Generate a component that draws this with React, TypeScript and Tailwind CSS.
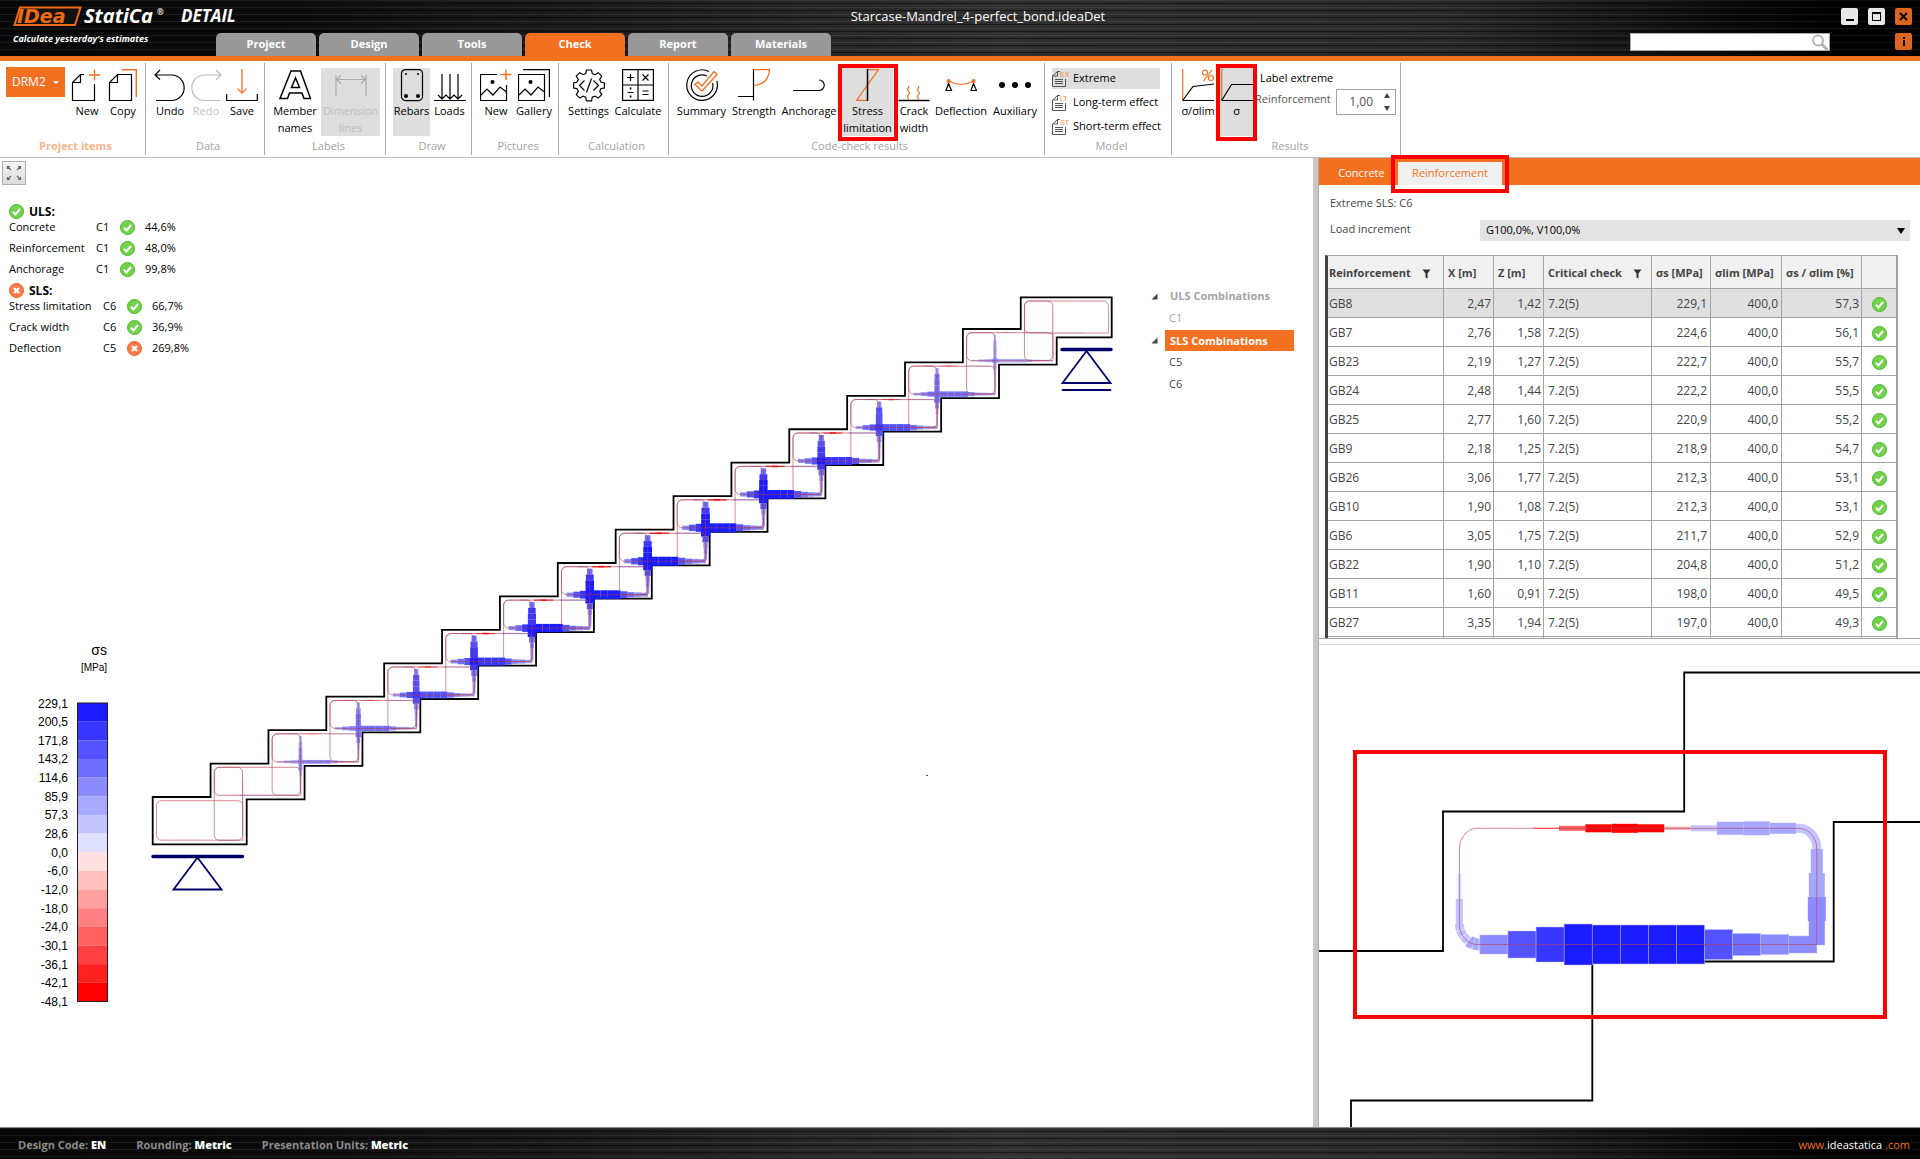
import { useState } from "react";
import type { ReactNode } from "react";

type Row = { id: string; x: string; z: string; ss: string; pct: string };

type CheckLine = { name: string; combo: string; value: string; ok: boolean };

const rows: Row[] = [
  { id: "GB8", x: "2,47", z: "1,42", ss: "229,1", pct: "57,3" },
  { id: "GB7", x: "2,76", z: "1,58", ss: "224,6", pct: "56,1" },
  { id: "GB23", x: "2,19", z: "1,27", ss: "222,7", pct: "55,7" },
  { id: "GB24", x: "2,48", z: "1,44", ss: "222,2", pct: "55,5" },
  { id: "GB25", x: "2,77", z: "1,60", ss: "220,9", pct: "55,2" },
  { id: "GB9", x: "2,18", z: "1,25", ss: "218,9", pct: "54,7" },
  { id: "GB26", x: "3,06", z: "1,77", ss: "212,3", pct: "53,1" },
  { id: "GB10", x: "1,90", z: "1,08", ss: "212,3", pct: "53,1" },
  { id: "GB6", x: "3,05", z: "1,75", ss: "211,7", pct: "52,9" },
  { id: "GB22", x: "1,90", z: "1,10", ss: "204,8", pct: "51,2" },
  { id: "GB11", x: "1,60", z: "0,91", ss: "198,0", pct: "49,5" },
  { id: "GB27", x: "3,35", z: "1,94", ss: "197,0", pct: "49,3" },
];

const ulsChecks: CheckLine[] = [
  { name: "Concrete", combo: "C1", value: "44,6%", ok: true },
  { name: "Reinforcement", combo: "C1", value: "48,0%", ok: true },
  { name: "Anchorage", combo: "C1", value: "99,8%", ok: true },
];

const slsChecks: CheckLine[] = [
  { name: "Stress limitation", combo: "C6", value: "66,7%", ok: true },
  { name: "Crack width", combo: "C6", value: "36,9%", ok: true },
  { name: "Deflection", combo: "C5", value: "269,8%", ok: false },
];

const tabs = ["Project", "Design", "Tools", "Check", "Report", "Materials"];

const tension = ["#e0e0ff", "#c4c4ff", "#a8a8ff", "#8c8cff", "#6e6eff", "#5252ff", "#3737ff", "#1b1bff"];
const compression = ["#ffe0e0", "#ffc0c0", "#ffa0a0", "#ff8080", "#ff6060", "#ff4040", "#ff2020", "#ff0000"];

const legendLabels = [
  "229,1", "200,5", "171,8", "143,2", "114,6", "85,9", "57,3", "28,6", "0,0",
  "-6,0", "-12,0", "-18,0", "-24,0", "-30,1", "-36,1", "-42,1", "-48,1",
];

const blue = (s: number) => tension[Math.max(0, Math.min(7, Math.floor(s * 8)))];

// ---------- icons ----------

const ORANGE = "#f37021";

function Ico({ children, className = "" }: { children: ReactNode; className?: string }) {
  return (
    <svg
      width="32"
      height="33"
      viewBox="0 0 32 33"
      fill="none"
      stroke="#000"
      strokeWidth="1.2"
      className={`shrink-0 ${className}`}
      aria-hidden="true"
    >
      {children}
    </svg>
  );
}

function StatusIcon({ ok }: { ok: boolean }) {
  return (
    <svg width="15" height="15" viewBox="0 0 15 15" className="inline-block shrink-0">
      <circle cx="7.5" cy="7.5" r="7" fill={ok ? "#74d14c" : "#fb7a48"} stroke={ok ? "#4cb930" : "#ee5f2c"} />
      {ok ? (
        <path d="M4 7.8l2.5 2.6L11 5" fill="none" stroke="#fff" strokeWidth="2" />
      ) : (
        <path d="M5 5l5 5M10 5l-5 5" fill="none" stroke="#fff" strokeWidth="2.4" />
      )}
    </svg>
  );
}

const NewIcon = () => (
  <Ico>
    <path d="M13 5.500H9.500L1.500 13.500V31.500H23.500V15M9.500 5.500V13.500H1.500" />
    <path d="M23.500 0.500V11.500M18 6H29" stroke={ORANGE} strokeWidth="1.4" />
  </Ico>
);
const CopyIcon = () => (
  <Ico>
    <path d="M10.500 5.500H24.500V31.500H2.500V13.500zM10.500 5.500V13.500H2.500" />
    <path d="M15 0.700H29.300V28" stroke={ORANGE} strokeWidth="1.4" />
  </Ico>
);
const UndoIcon = () => (
  <Ico>
    <path d="M6 1L1 6l5 4.500M1 6H18.500a12.800 12.800 0 0 1 0 25.500H2" />
  </Ico>
);
const RedoIcon = () => (
  <Ico>
    <path d="M26 1l5 5-5 4.500M31 6H13.500a12.800 12.800 0 0 0 0 25.500H30" stroke="#bbb" />
  </Ico>
);
const SaveIcon = () => (
  <Ico>
    <path d="M0.700 25V31.500H31.300V25" />
    <path d="M16 0V24M11.500 19.500L16 24l4.500-4.500" stroke="#f58b50" strokeWidth="1.600" />
  </Ico>
);
const LetterIcon = () => (
  <Ico>
    <path d="M12 2h9.500l10 27.500h-6.500l-2-5.500H10.500L8.500 29.500H1zM16.500 9l-4 9.500h8z" strokeWidth="1.500" />
  </Ico>
);
const DimensionIcon = () => (
  <Ico>
    <path d="M1 6V27M31 6V27M2 10.500H30M6 6.500l-4.500 4 4.500 4M26 6.500l4.500 4-4.500 4" stroke="#aaa" />
  </Ico>
);
const RebarsIcon = () => (
  <Ico>
    <rect x="5.500" y="0.600" width="21" height="31" rx="4" />
    <circle cx="10" cy="5" r="1" fill="#000" stroke="none" />
    <circle cx="22" cy="5" r="1" fill="#000" stroke="none" />
    <circle cx="10" cy="27" r="2" fill="#000" stroke="none" />
    <circle cx="22" cy="27" r="2" fill="#000" stroke="none" />
  </Ico>
);
const LoadsIcon = () => (
  <Ico>
    <path d="M0 31.500H32M8 5V29M16 5V29M24 5V29M4 26l4 4 4-4 4 4 4-4 4 4 4-4" />
  </Ico>
);
const PictureIcon = () => (
  <Ico>
    <path d="M17 5.500H0.500V31.500H26.500V16M1 26l6-6 6 6 7-8 6.500 5" />
    <circle cx="12.500" cy="13" r="2" fill="#000" stroke="none" />
    <path d="M26 0.500V11M20.500 5.500H31.500" stroke={ORANGE} strokeWidth="1.4" />
  </Ico>
);
const GalleryIcon = () => (
  <Ico>
    <path d="M0.500 5.500H26.500V31.500H0.500zM1 26l6-6 6 6 7-8 6.500 5M5 0.600H31.400V28" />
    <circle cx="12.500" cy="13" r="2" fill="#000" stroke="none" />
  </Ico>
);
const SettingsIcon = () => (
  <Ico>
    <path d="M13.500 1h5l.8 3.600 2.700 1.100L25.200 3.700l3.500 3.500-2 3.200 1.100 2.700 3.600.8v5l-3.600.8-1.100 2.700 2 3.200-3.500 3.500-3.200-2-2.700 1.100-.8 3.600h-5l-.8-3.600-2.700-1.100-3.200 2-3.500-3.500 2-3.200-1.100-2.700L.6 18.900v-5l3.600-.8 1.100-2.700-2-3.200 3.500-3.500L10 5.700l2.700-1.100z" />
    <path d="M11.500 11.500L6.500 16.500l5 5M20.500 11.500l5 5-5 5M18.500 9.500l-5 14" />
  </Ico>
);
const CalculateIcon = () => (
  <Ico>
    <path d="M0.600 0.600H31.400V31.400H0.600zM16 0.500V31.500M0.500 16H31.500" />
    <path d="M5 8.500h7M8.500 5v7M20.500 5.500l6 6M26.500 5.500l-6 6M5.500 23.500h6M20.500 22h6M20.500 25.500h6" />
    <path d="M7.800 19.500h1.600M7.800 27.500h1.600" strokeWidth="1.800" />
  </Ico>
);
const SummaryIcon = () => (
  <Ico>
    <path d="M23 2.500A15.300 15.300 0 1 0 30.800 12" />
    <path d="M21 7A10.800 10.800 0 1 0 26.600 14" />
    <path d="M9 15.500l3-2.500 4 4L28 2.500l3 3L16 22z" stroke={ORANGE} strokeWidth="1.4" />
  </Ico>
);
const StrengthIcon = () => (
  <Ico>
    <path d="M15.500 0V31.500M0 27.500H15.500" />
    <path d="M15.500 0.600H31.500Q30.500 15.500 15.500 16.500" stroke={ORANGE} />
  </Ico>
);
const AnchorageIcon = () => (
  <Ico>
    <path d="M0 21.500H26a5.200 5.200 0 0 0 0-10.500" />
  </Ico>
);
const StressIcon = () => (
  <Ico>
    <path d="M15.500 0.600H26.500L4.500 31.400H15.500" stroke={ORANGE} />
    <path d="M15.500 0V32" strokeWidth="1.500" />
  </Ico>
);
const CrackIcon = () => (
  <Ico>
    <path d="M0.500 31.500H31.500" strokeWidth="1.500" />
    <path
      d="M11 17l-1.500 4 2 3-2 3 1 4M21 17l-1.500 4 2 3-2 3 1 4"
      stroke={ORANGE}
    />
  </Ico>
);
const DeflectionIcon = () => (
  <Ico>
    <path d="M3.500 14.500L1 21.500h5.500zM28.500 14.500L26 21.500h5.500z" />
    <path d="M3.500 12Q16 19 28.500 12" stroke={ORANGE} />
    <circle cx="3.500" cy="12" r="2" fill={ORANGE} stroke="none" />
    <circle cx="28.500" cy="12" r="2" fill={ORANGE} stroke="none" />
  </Ico>
);
const DotsIcon = () => (
  <Ico>
    <circle cx="3" cy="16" r="3" fill="#000" stroke="none" />
    <circle cx="16" cy="16" r="3" fill="#000" stroke="none" />
    <circle cx="29" cy="16" r="3" fill="#000" stroke="none" />
  </Ico>
);
const RatioIcon = () => (
  <Ico>
    <path d="M0.700 0V31.500" stroke={ORANGE} />
    <path d="M0.500 31.500H32M1 31L11 17.500 32 15" />
    <circle cx="23" cy="3.500" r="2.500" stroke={ORANGE} />
    <circle cx="29" cy="9" r="2.500" stroke={ORANGE} />
    <path d="M30 1L21.500 12" stroke={ORANGE} />
  </Ico>
);
const SigmaIcon = () => (
  <Ico>
    <path d="M0.700 0V31.500" stroke={ORANGE} />
    <path d="M0.500 31.500H32M1 31L10.500 15.500H32" />
  </Ico>
);

function DocIcon({ tag }: { tag: string }) {
  return (
    <svg width="17" height="18" viewBox="0 0 17 18" fill="none" stroke="#555" className="shrink-0" aria-hidden="true">
      <path d="M8 1.500H5.500L0.500 6V16.500H13.500V9M5.500 1.500V6H0.500M3 9.500h8M3 11.500h8M3 13.500h8" />
      <text x="8" y="7" fontSize="7" fill="#f58b50" stroke="none" fontFamily="Liberation Sans, sans-serif">
        {tag}
      </text>
    </svg>
  );
}

// ---------- ribbon ----------

const Ring = ({ className }: { className: string }) => (
  <span className={`absolute border-4 border-[#ff0000] pointer-events-none z-10 ${className}`} />
);

function RibbonButton({
  icon,
  label,
  className,
  children,
}: {
  icon: ReactNode;
  label: string;
  className: string;
  children?: ReactNode;
}) {
  return (
    <button type="button" className={`relative h-[68px] pt-px flex flex-col items-center shrink-0 ${className}`}>
      {icon}
      <span className="whitespace-pre text-center leading-[17px]">{label}</span>
      {children}
    </button>
  );
}

function Group({
  caption,
  className,
  captionClass = "text-[#a3a3a3]",
  children,
}: {
  caption: string;
  className: string;
  captionClass?: string;
  children: ReactNode;
}) {
  return (
    <section className={`flex flex-col justify-between border-r border-[#a9a9a9] h-[92px] pt-[5px] shrink-0 ${className}`}>
      <div className="flex items-start">{children}</div>
      <div className={`text-center leading-[18px] ${captionClass}`}>{caption}</div>
    </section>
  );
}

function Ribbon() {
  return (
    <div className="flex h-[97px] pt-[2px] border-b border-[#bdbdbd] bg-white">
      <Group caption="Project items" className="w-[146px] pl-[6px]" captionClass="text-[#f9b48c] font-bold">
        <div className="relative mr-1 -mt-px">
          <select
            aria-label="Project item"
            className="appearance-none w-[59px] h-[30px] pl-[6px] bg-[#f37021] text-white text-xs"
          >
            <option>DRM2</option>
          </select>
          <span className="absolute right-[6px] top-[14px] border-x-[3px] border-t-[3px] border-x-transparent border-t-white" />
        </div>
        <RibbonButton icon={<NewIcon />} label="New" className="w-[36px]" />
        <RibbonButton icon={<CopyIcon />} label="Copy" className="w-[36px]" />
      </Group>
      <Group caption="Data" className="w-[119px] pl-[6px]">
        <RibbonButton icon={<UndoIcon />} label="Undo" className="w-[36px]" />
        <RibbonButton icon={<RedoIcon />} label="Redo" className="w-[36px] text-[#c4c4c4]" />
        <RibbonButton icon={<SaveIcon />} label="Save" className="w-[36px]" />
      </Group>
      <Group caption="Labels" className="w-[121px] pl-[7px]">
        <RibbonButton icon={<LetterIcon />} label={"Member\nnames"} className="w-[46px]" />
        <RibbonButton
          icon={<DimensionIcon />}
          label={"Dimension\nlines"}
          className="w-[59px] ml-[3px] bg-[#dedede] text-[#bdbdbd]"
        />
      </Group>
      <Group caption="Draw" className="w-[86px] pl-[7px]">
        <RibbonButton icon={<RebarsIcon />} label="Rebars" className="w-[37px] bg-[#dedede]" />
        <RibbonButton icon={<LoadsIcon />} label="Loads" className="w-[39px]" />
      </Group>
      <Group caption="Pictures" className="w-[87px] pl-[6px]">
        <RibbonButton icon={<PictureIcon />} label="New" className="w-[36px]" />
        <RibbonButton icon={<GalleryIcon />} label="Gallery" className="w-[40px]" />
      </Group>
      <Group caption="Calculation" className="w-[110px] pl-[6px]">
        <RibbonButton icon={<SettingsIcon />} label="Settings" className="w-[47px]" />
        <RibbonButton icon={<CalculateIcon />} label="Calculate" className="w-[52px]" />
      </Group>
      <Group caption="Code-check results" className="w-[376px] pl-[6px]">
        <RibbonButton icon={<SummaryIcon />} label="Summary" className="w-[53px]" />
        <RibbonButton icon={<StrengthIcon />} label="Strength" className="w-[52px]" />
        <RibbonButton icon={<AnchorageIcon />} label="Anchorage" className="w-[58px]" />
        <RibbonButton
          icon={<StressIcon />}
          label={"Stress\nlimitation"}
          className="w-[51px] mx-1 bg-[#dedede]"
        >
          <Ring className="-left-1 -right-[5px] -top-1 -bottom-[5px]" />
        </RibbonButton>
        <RibbonButton icon={<CrackIcon />} label={"Crack\nwidth"} className="w-[34px]" />
        <RibbonButton icon={<DeflectionIcon />} label="Deflection" className="w-[60px]" />
        <RibbonButton icon={<DotsIcon />} label="Auxiliary" className="w-[48px]" />
      </Group>
      <Group caption="Model" className="w-[127px] pl-[7px]">
        <div className="flex flex-col gap-[3px]">
          {[
            ["EX", "Extreme"],
            ["LT", "Long-term effect"],
            ["ST", "Short-term effect"],
          ].map(([tag, label], i) => (
            <button
              key={tag}
              type="button"
              className={`flex items-center gap-1 w-[108px] h-[21px] whitespace-nowrap ${i === 0 ? "bg-[#dedede]" : ""}`}
            >
              <DocIcon tag={tag} />
              {label}
            </button>
          ))}
        </div>
      </Group>
      <Group caption="Results" className="w-[229px] pl-[8px]">
        <RibbonButton icon={<RatioIcon />} label="σ/σlim" className="w-[36px]" />
        <RibbonButton icon={<SigmaIcon />} label="σ" className="w-[33px] ml-1 bg-[#dedede]">
          <Ring className="-left-1 -right-1 -top-1 -bottom-[5px]" />
        </RibbonButton>
        <div className="flex flex-col">
          <span className="pl-[7px] leading-[20px]">Label extreme</span>
          <label className="flex items-start text-[#555]">
            <span className="leading-[22px] w-[83px] pl-[2px] whitespace-nowrap">Reinforcement</span>
            <span className="flex items-center justify-between border border-[#a3a3a3] w-[60px] h-[26px] mt-px pr-1">
              <input defaultValue="1,00" className="w-[36px] text-right text-xs outline-none" />
              <svg width="8" height="20" viewBox="0 0 8 20" fill="#444" aria-hidden="true">
                <path d="M4 1l3 5H1zM4 19l3-5H1z" />
              </svg>
            </span>
          </label>
        </div>
      </Group>
    </div>
  );
}

// ---------- header ----------

const brushed =
  "bg-[repeating-linear-gradient(180deg,rgba(255,255,255,0.07)_0_1px,transparent_1px_3px,rgba(0,0,0,0.5)_3px_4px,transparent_4px_7px),linear-gradient(90deg,#080808_0%,#0c0c0c_15%,#303030_52%,#2a2a2a_75%,#000_95%)]";

function Logo() {
  return (
    <svg width="250" height="50" viewBox="0 0 250 50" className="shrink-0" aria-label="IDEA StatiCa Detail">
      <path d="M20 7.500H80.500L75 25H14.500z" fill="#111" stroke="#ee6a13" strokeWidth="2" />
      <text
        x="17"
        y="23"
        fontSize="19"
        fill="#ee6a13"
        fontFamily="DejaVu Sans, sans-serif"
        fontWeight="bold"
        fontStyle="italic"
      >
        IDea
      </text>
      <g fontFamily="Open Sans, sans-serif" fontWeight="bold" fontStyle="italic" fill="#fff">
        <text x="84" y="23" fontSize="20">StatiCa</text>
        <text x="157" y="15" fontSize="8">®</text>
        <text x="181" y="22" fontSize="17">DETAIL</text>
        <text x="13" y="42" fontSize="9">Calculate yesterday's estimates</text>
      </g>
    </svg>
  );
}

function Header({ active, onSelect }: { active: string; onSelect: (t: string) => void }) {
  return (
    <header className={`relative flex justify-between h-[61px] border-b-[5px] border-[#f37021] ${brushed}`}>
      <div className="flex">
        <Logo />
      </div>
      <nav className="absolute left-[216px] bottom-0 flex gap-[3px]">
        {tabs.map((t) => (
          <button
            key={t}
            type="button"
            onClick={() => onSelect(t)}
            className={`w-[100px] h-[23px] rounded-t-[5px] text-white font-bold ${
              active === t ? "bg-[#f37021]" : "bg-[#999]"
            }`}
          >
            {t}
          </button>
        ))}
      </nav>
      <h1 className="absolute inset-x-0 top-[7px] pl-9 text-center text-white text-[13px] leading-[18px] pointer-events-none">
        Starcase-Mandrel_4-perfect_bond.ideaDet
      </h1>
      <div className="flex flex-col items-end gap-2 pt-2 pr-2">
        <div className="flex gap-[10px]">
          <button type="button" aria-label="Minimize" className="w-[17px] h-[17px] rounded-[2px] bg-[#e8e8e8] flex justify-center items-end pb-1">
            <span className="w-2 h-[2px] bg-black" />
          </button>
          <button type="button" aria-label="Maximize" className="w-[17px] h-[17px] rounded-[2px] bg-[#e8e8e8] flex justify-center items-center">
            <span className="w-[9px] h-[9px] border border-t-2 border-black" />
          </button>
          <button type="button" aria-label="Close" className="w-[17px] h-[17px] rounded-[2px] bg-[#de6521] flex justify-center items-center">
            <svg width="9" height="9" viewBox="0 0 9 9" stroke="#000" strokeWidth="2">
              <path d="M1 1l7 7M8 1l-7 7" />
            </svg>
          </button>
        </div>
        <div className="flex gap-[65px]">
          <div className="flex items-center w-[200px] h-[18px] bg-white border border-[#aaa]">
            <input aria-label="Search" className="flex-1 min-w-0 h-4 outline-none" />
            <svg width="18" height="17" viewBox="0 0 18 17" fill="none" stroke="#b5b5b5" strokeWidth="2" aria-hidden="true">
              <circle cx="7" cy="6.500" r="5" />
              <path d="M10.500 10l6 6" strokeWidth="3" />
            </svg>
          </div>
          <button type="button" aria-label="Info" className="w-[17px] h-[17px] rounded-[2px] bg-[#de6521] flex flex-col items-center justify-center gap-px">
            <span className="w-[2px] h-[2px] bg-black" />
            <span className="w-[2px] h-[6px] bg-black" />
          </button>
        </div>
      </div>
    </header>
  );
}

// ---------- staircase model ----------

const STEP_X = 57.87;
const STEP_Y = 33.43;
const STEPS = 15;
const cornerX = (k: number) => 152.7 + STEP_X * k;
const cornerY = (k: number) => (k === STEPS ? 297.3 : 797 - STEP_Y * k);

// relative stress in the stirrups of each step
const amplitude = [0, 0.14, 0.42, 0.58, 0.76, 0.88, 0.93, 0.97, 1, 1, 0.97, 0.88, 0.76, 0.6, 0.38, 0.12];

const bottomProfile = [0.46, 0.66, 0.85, 1, 0.95, 0.95, 0.95, 0.95, 0.74, 0.55, 0.49, 0.42];
const legProfile = [0.6, 0.85, 0.92, 0.92, 1, 0.95, 0.65, 0.45, 0.38, 0.35];
const topProfile = [0.3, 0.7, 0.9, 0.7, 0.2];

function outline() {
  let d = "M152.7 844.3";
  for (let k = 0; k <= STEPS; k++) {
    d += `V${cornerY(k)}`;
    d += k < STEPS ? `H${cornerX(k + 1)}` : "H1111.7";
  }
  d += "V337.3H1056.7";
  for (let k = STEPS - 2; k >= 0; k--) {
    d += `V${799.3 - STEP_Y * k}H${246.7 + STEP_X * k}`;
  }
  return d + "V844.3z";
}

function StepBars({ k }: { k: number }) {
  const a = amplitude[k];
  const x = cornerX(k) + 3.7;
  const y = cornerY(k) + 3.7;
  const last = k === STEPS;
  const by = y + (last ? 32 : 28);
  const leg = x + 28.3;
  const scale = 9.5;
  const segs = last ? bottomProfile.slice(0, 8) : bottomProfile;
  return (
    <g>
      {segs.map((s, i) => (
        <rect key={i} x={x + 5 + i * 6.78} y={by - (s * a * scale) / 2} width="6.78" height={s * a * scale} fill={blue(s * a)} />
      ))}
      {legProfile.map((s, i) => (
        <rect key={i} x={leg - (s * a * scale) / 2} y={y + 2 + i * 5.8} width={s * a * scale} height="5.8" fill={blue(s * a)} />
      ))}
      {topProfile.map((s, i) => (
        <rect
          key={i}
          x={x + 24 + i * 6.4}
          y={y - s * a}
          width="6.4"
          height={s * a * 2}
          fill={compression[Math.floor(Math.min(1, s * a * 1.3) * 7)]}
        />
      ))}
      <rect x={x + 56} y={y - a * 0.8} width="26" height={a * 1.6} fill="#c4c4ff" />
      <rect x={x + 16} y={y - a * 0.8} width="9" height={a * 1.6} fill="#c4c4ff" />
    </g>
  );
}

function StepCages({ k }: { k: number }) {
  const x = cornerX(k) + 3.7;
  const y = cornerY(k) + 3.7;
  const last = k === STEPS;
  const wideH = k === 0 ? 39.5 : last ? 32 : 28;
  const tallH = k === 1 ? 73 : last ? 59.5 : 61.3;
  return (
    <g fill="none" stroke="#b03848" strokeWidth="0.8" strokeOpacity="0.7">
      <path
        d={`M${x} ${y + 5}a5 5 0 0 1 5 -5H${x + (last ? 79 : 81.5)}a5 5 0 0 1 5 5V${y + wideH}H${x + 5}a5 5 0 0 1 -5 -5z`}
      />
      {k > 0 && <rect x={x} y={y} width="28.3" height={tallH} rx="5" />}
    </g>
  );
}

function StaircaseModel() {
  const steps = Array.from({ length: STEPS + 1 }, (_, k) => k);
  return (
    <svg
      className="absolute inset-0 w-full h-full"
      viewBox="0 158 1313 969"
      preserveAspectRatio="xMinYMin meet"
      aria-label="Stress in reinforcement"
    >
      <path d={outline()} fill="none" stroke="#000" strokeWidth="1.800" />
      {steps.map((k) => (
        <StepBars key={k} k={k} />
      ))}
      {steps.map((k) => (
        <StepCages key={k} k={k} />
      ))}

      {/* supports */}
      <g fill="none" stroke="#00006a" strokeLinecap="round">
        <path d="M153 856.500H242.500M1062 349.500H1111" strokeWidth="3.500" />
        <path d="M197.500 857.500L173.500 889.500H221.500zM1086.500 351L1062.500 383H1110.500z" strokeWidth="1.800" />
        <path d="M1062.500 390H1110.500" strokeWidth="1.800" />
      </g>
      <rect x="926" y="775" width="2" height="1" fill="#555" />

      {/* legend */}
      <g fontFamily="Liberation Sans, sans-serif" textAnchor="end">
        <text x="107" y="655" fontSize="14">σs</text>
        <text x="107" y="671" fontSize="10">[MPa]</text>
        {legendLabels.map((t, i) => (
          <text key={t} x="68" y={707.5 + i * 18.65} fontSize="12">{t}</text>
        ))}
      </g>
      {[...[...tension].reverse(), ...compression].map((c, i) => (
        <rect key={c} x="77.500" y={703 + i * 18.65} width="30" height="18.700" fill={c} />
      ))}
      <rect x="77.500" y="703" width="30" height="298.500" fill="none" stroke="#222" />
    </svg>
  );
}

// ---------- left pane ----------

function Checks({ title, ok, lines, className }: { title: string; ok: boolean; lines: CheckLine[]; className: string }) {
  return (
    <div>
      <div className="flex items-center gap-[5px] h-[15px] -mb-[2px] font-bold text-xs">
        <StatusIcon ok={ok} />
        {title}
      </div>
      {lines.map((l) => (
        <div key={l.name} className={`grid items-center h-[21px] ${className}`}>
          <span>{l.name}</span>
          <span>{l.combo}</span>
          <StatusIcon ok={l.ok} />
          <span>{l.value}</span>
        </div>
      ))}
    </div>
  );
}

function CombinationTree() {
  const arrow = (
    <svg width="7" height="7" viewBox="0 0 7 7" aria-hidden="true">
      <path d="M6.500 0.500V6.500H0.500z" fill="#444" />
    </svg>
  );
  return (
    <ul className="absolute left-[1151px] top-[127px] w-[143px] leading-[22px] text-[#444]">
      <li>
        <button type="button" className="flex items-center gap-[7px] w-full text-left text-[#a3a3a3] font-bold">
          {arrow}
          <span className="flex-1 pl-[5px]">ULS Combinations</span>
        </button>
      </li>
      <li className="pl-[18px] text-[#a3a3a3]">C1</li>
      <li>
        <button type="button" className="flex items-center gap-[7px] w-full pt-px text-left text-white font-bold">
          {arrow}
          <span className="flex-1 pl-[5px] bg-[#f37021] leading-[21px]">SLS Combinations</span>
        </button>
      </li>
      <li className="pl-[18px]">C5</li>
      <li className="pl-[18px]">C6</li>
    </ul>
  );
}

function ModelPane() {
  return (
    <div className="relative flex-1 min-w-0 bg-white overflow-hidden">
      <StaircaseModel />
      <div className="relative flex flex-col items-start pl-[2px] pt-[3px]">
        <button type="button" aria-label="Zoom all" className="border border-[#b0b0b0] bg-linear-to-b from-[#f4f4f4] to-[#dcdcdc] p-[3px]">
          <svg width="16" height="16" viewBox="0 0 16 16" stroke="#666" strokeWidth="1.200" fill="none">
            <path d="M1.500 4V1.500H4M1.500 1.500l3.500 3.500M12 1.500h2.500V4M14.500 1.500L11 5M1.500 12v2.500H4M1.500 14.500L5 11M12 14.500h2.500V12M14.500 14.500L11 11" />
          </svg>
        </button>
        <div className="flex flex-col gap-[3px] pl-[7px] pt-[19px]">
          <Checks title="ULS:" ok lines={ulsChecks} className="grid-cols-[87px_24px_25px_auto]" />
          <Checks title="SLS:" ok={false} lines={slsChecks} className="grid-cols-[94px_24px_25px_auto]" />
        </div>
      </div>
      <CombinationTree />
    </div>
  );
}

// ---------- right pane ----------

const Funnel = () => (
  <svg width="9" height="10" viewBox="0 0 9 10" className="inline-block ml-[11px]" aria-hidden="true">
    <path d="M0.500 0.500h8L5.500 4.500V9.500L3.500 8.500V4.500z" fill="#333" />
  </svg>
);

function ResultsTable() {
  const th = "border-r border-b border-[#a3a3a3] text-left font-bold pt-[2px] whitespace-nowrap";
  const td = "border-r border-b border-[#a3a3a3] pt-[2px] whitespace-nowrap";
  return (
    <table className="table-fixed w-[573px] ml-[6px] border-separate border-spacing-0 border-t border-l-[3px] border-t-[#a3a3a3] border-l-[#444] border-r border-r-[#a3a3a3] text-[#444]">
      <colgroup>
        <col className="w-[116px]" />
        <col className="w-[50px]" />
        <col className="w-[50px]" />
        <col className="w-[108px]" />
        <col className="w-[59px]" />
        <col className="w-[71px]" />
        <col className="w-[80px]" />
        <col />
      </colgroup>
      <thead>
        <tr className="h-[33px] bg-[#f0f0f0]">
          <th className={`${th} pl-px`}>
            Reinforcement
            <Funnel />
          </th>
          <th className={`${th} pl-1`}>X [m]</th>
          <th className={`${th} pl-1`}>Z [m]</th>
          <th className={`${th} pl-1`}>
            Critical check
            <Funnel />
          </th>
          <th className={`${th} pl-1`}>σs [MPa]</th>
          <th className={`${th} pl-1`}>σlim [MPa]</th>
          <th className={`${th} pl-1`}>σs / σlim [%]</th>
          <th className={th} aria-label="Status" />
        </tr>
      </thead>
      <tbody className="text-xs">
        {rows.map((r, i) => (
          <tr key={r.id} className={`h-[29px] ${i === 0 ? "bg-[#e0e0e0]" : ""}`}>
            <td className={`${td} pl-px`}>{r.id}</td>
            <td className={`${td} text-right pr-[2px]`}>{r.x}</td>
            <td className={`${td} text-right pr-[2px]`}>{r.z}</td>
            <td className={`${td} pl-1`}>7.2(5)</td>
            <td className={`${td} text-right pr-[3px]`}>{r.ss}</td>
            <td className={`${td} text-right pr-[3px]`}>400,0</td>
            <td className={`${td} text-right pr-[2px]`}>{r.pct}</td>
            <td className={td}>
              <span className="flex justify-center">
                <StatusIcon ok />
              </span>
            </td>
          </tr>
        ))}
        <tr className="h-[29px]">
          {Array.from({ length: 8 }, (_, i) => (
            <td key={i} className={td} />
          ))}
        </tr>
      </tbody>
    </table>
  );
}

// [half width, colour] for consecutive bar segments
const detailBottom: [number, number][] = [
  [9.5, 3], [13.5, 5], [17.5, 6], [20.5, 7], [19.5, 7], [19.5, 7],
  [19.5, 7], [19.5, 7], [15, 5], [11, 4], [10, 3], [8.5, 3],
];
const detailTop: [number, string][] = [
  [2.5, "#ff6060"], [4, "#ff0000"], [4.5, "#ff0000"], [4, "#ff0000"], [1.700, "#ffb0b0"],
  [3, "#c4c4ff"], [6.5, "#a8a8ff"], [7, "#a8a8ff"], [5.5, "#a8a8ff"],
];
const detailRight: [number, string][] = [
  [6, "#a8a8ff"], [8, "#a8a8ff"], [9, "#8c8cff"], [8, "#8c8cff"],
];

function BarDetail() {
  return (
    <svg
      className="absolute inset-0 w-full h-full"
      viewBox="1319 645 601 482"
      preserveAspectRatio="xMinYMin meet"
      aria-label="Stress in selected stirrup"
    >
      <g fill="none" stroke="#000" strokeWidth="1.800">
        <path d="M1319 951H1443V811.500H1684.200V672.500H1920" />
        <path d="M1351 1127V1100.500H1592.300V961.500H1833.700V822H1920" />
      </g>
      {detailBottom.map(([h, c], i) => (
        <rect
          key={i}
          x={1479.9 + i * 28.08}
          y={944.5 - h}
          width="28.080"
          height={h * 2}
          fill={tension[c]}
          stroke="#b8b8ff"
          strokeWidth="0.500"
        />
      ))}
      {detailTop.map(([h, c], i) => (
        <rect key={i} x={1559 + i * 26.32} y={828.3 - h} width="26.320" height={h * 2} fill={c} />
      ))}
      {detailRight.map(([h, c], i) => (
        <rect key={i} x={1816.8 - h} y={849 + i * 24} width={h * 2} height="24" fill={c} />
      ))}
      <rect x="1457.500" y="874" width="4" height="25" fill="#e0e0ff" />
      <rect x="1455.800" y="899" width="7" height="25" fill="#c4c4ff" />
      <g fill="none" strokeWidth="9">
        <path d="M1796 828.300h3a18 20 0 0 1 17.800 20.700" stroke="#c4c4ff" />
        <path d="M1459.400 924a18 20 0 0 0 14 19" stroke="#c4c4ff" strokeDasharray="6 0.500" />
        <path d="M1469 941a16 16 0 0 0 11 3.500" stroke="#a8a8ff" strokeWidth="12" strokeDasharray="5 0.500" />
      </g>
      <path
        d="M1459.400 849a18 20.700 0 0 1 17 -20.700H1799a18 20.700 0 0 1 17.800 20.700V944.500H1477a18 20.500 0 0 1 -17.600 -20.500z"
        fill="none"
        stroke="#b04068"
        strokeWidth="0.900"
        strokeOpacity="0.700"
      />
      <path d="M1533 828.300H1560" stroke="#ff4040" strokeWidth="1" />
      <rect x="1355" y="752" width="530" height="265" fill="none" stroke="#ff0000" strokeWidth="4" />
    </svg>
  );
}

function ResultsPane() {
  return (
    <aside className="flex flex-col w-[601px] shrink-0 bg-white">
      <div className="flex flex-col h-[481px] border-b border-[#a3a3a3]">
        <div className="flex items-end h-[27px] bg-[#f37021]">
          <button type="button" className="w-[79px] h-[23px] pl-[6px] text-white">
            Concrete
          </button>
          <button type="button" className="relative w-[104px] h-[23px] bg-[#f0f0f0] text-[#f37021]">
            Reinforcement
            <Ring className="-left-[7px] -right-[7px] -top-[7px] -bottom-2" />
          </button>
        </div>
        <div className="pl-[11px] pt-[9px] text-[#444] leading-[18px]">Extreme SLS: C6</div>
        <label className="flex items-start pl-[11px] pr-[10px] pt-2 text-[#444]">
          <span className="w-[150px] leading-[17px]">Load increment</span>
          <span className="relative flex-1">
            <select className="appearance-none block w-full h-[21px] pl-[6px] bg-[#e3e3e3] text-[11px] text-black">
              <option>G100,0%, V100,0%</option>
            </select>
            <span className="absolute right-[5px] top-2 border-x-4 border-t-[6px] border-x-transparent border-t-black" />
          </span>
        </label>
        <div className="mt-[14px] flex-1 min-h-0 overflow-hidden">
          <ResultsTable />
        </div>
      </div>
      <div className="mt-[5px] border-t border-[#d4d4d4] relative flex-1">
        <BarDetail />
      </div>
    </aside>
  );
}

function Footer() {
  return (
    <footer className={`flex items-center justify-between h-8 border-t border-[#888] pt-[3px] px-[10px] text-[#8c8c8c] ${brushed}`}>
      <div className="flex gap-[30px] pl-2 font-bold">
        <span>Design Code: <b className="text-white">EN</b></span>
        <span>Rounding: <b className="text-white">Metric</b></span>
        <span>Presentation Units: <b className="text-white">Metric</b></span>
      </div>
      <a href="#" className="text-[#f37021]">
        www.<span className="text-white">ideastatica</span> .com
      </a>
    </footer>
  );
}

export default function App() {
  const [active, setActive] = useState("Check");

  return (
    <div className="flex flex-col min-h-screen bg-white text-black text-[11px] font-['Open_Sans','Noto_Sans',sans-serif]">
      <Header active={active} onSelect={setActive} />
      <Ribbon />
      <main className="flex flex-1">
        <ModelPane />
        <div className="w-[6px] shrink-0 bg-[#c8c8c8] border-r border-[#a9a9a9]" />
        <ResultsPane />
      </main>
      <Footer />
    </div>
  );
}
